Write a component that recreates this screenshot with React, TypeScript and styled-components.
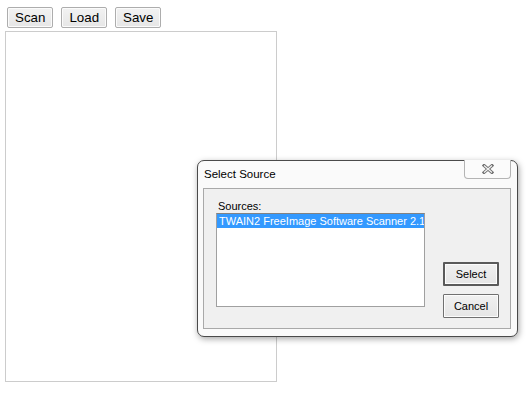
import React from "react";
import styled, { createGlobalStyle } from "styled-components";

const Global = createGlobalStyle`
  html, body { margin: 0; padding: 0; background: #ffffff; }
  body { font-family: "Liberation Sans", Arial, sans-serif; }
`;

const Page = styled.div`
  position: relative;
  width: 528px;
  height: 396px;
  overflow: hidden;
`;

const Toolbar = styled.div`
  display: flex;
  gap: 8px;
  padding: 7px 0 0 7px;
`;

const ToolButton = styled.button`
  font-family: "Liberation Sans", Arial, sans-serif;
  font-size: 13.33px;
  line-height: 15px;
  height: 21px;
  padding: 1px 7px;
  border: 1px solid #adadad;
  border-radius: 2px;
  background: linear-gradient(#f2f2f2, #e6e6e6);
  color: #000;
  box-shadow: inset 0 0 0 1px #fbfbfb;
`;

const CanvasBox = styled.div`
  margin: 3px 0 0 5px;
  width: 270px;
  height: 349px;
  border: 1px solid #cccccc;
  background: #fff;
`;

const Dialog = styled.div`
  position: absolute;
  left: 197px;
  top: 160px;
  width: 319px;
  height: 175px;
  border: 1px solid #4a4a4a;
  border-radius: 7px;
  background: #fafafa;
  box-shadow: 1px 2px 6px rgba(0, 0, 0, 0.35);
  display: flex;
  flex-direction: column;
  font-family: "Liberation Sans", Arial, sans-serif;
  font-size: 11px;
`;

const TitleBar = styled.div`
  position: relative;
  height: 27px;
  display: flex;
  align-items: center;
  padding-left: 6px;
  padding-bottom: 1px;
  box-sizing: border-box;
  color: #000;
  font-size: 11.5px;
`;

const CloseButton = styled.div`
  position: absolute;
  top: -1px;
  right: 6px;
  width: 45px;
  height: 18px;
  border: 1px solid #b4b4b4;
  border-top: none;
  border-radius: 0 0 4px 4px;
  background: #fbfbfb;
  display: flex;
  align-items: center;
  justify-content: center;
`;

const Client = styled.div`
  margin: 0 6px 7px 5px;
  flex: 1;
  border: 1px solid #a9a9a9;
  background: #f0f0f0;
  display: flex;
  padding: 10px 11px 10px 12px;
`;

const LeftCol = styled.div`
  display: flex;
  flex-direction: column;
`;

const Label = styled.div`
  line-height: 14px;
  padding-left: 2px;
  color: #000;
`;

const ListBox = styled.div`
  width: 207px;
  height: 92px;
  border: 1px solid #a0a0a0;
  border-top-color: #828282;
  background: #fff;
`;

const ListItem = styled.div<{ $selected?: boolean }>`
  height: 14px;
  line-height: 14px;
  padding-left: 2px;
  white-space: nowrap;
  overflow: hidden;
  background: ${(p) => (p.$selected ? "#3399ff" : "transparent")};
  color: ${(p) => (p.$selected ? "#fff" : "#000")};
`;

const RightCol = styled.div`
  margin-left: 18px;
  display: flex;
  flex-direction: column;
  justify-content: flex-end;
  gap: 8px;
`;

const DlgButton = styled.button<{ $default?: boolean }>`
  font-family: "Liberation Sans", Arial, sans-serif;
  font-size: 11px;
  width: 56px;
  height: 24px;
  padding: 0;
  color: #000;
  border: ${(p) => (p.$default ? "2px solid #5a5a5a" : "1px solid #707070")};
  border-radius: 1px;
  background: linear-gradient(#f0f0f0, #e5e5e5);
  box-shadow: inset 0 0 0 1px #fcfcfc;
`;

export default function App() {
  return (
    <Page>
      <Global />
      <Toolbar>
        <ToolButton>Scan</ToolButton>
        <ToolButton>Load</ToolButton>
        <ToolButton>Save</ToolButton>
      </Toolbar>
      <CanvasBox />
      <Dialog>
        <TitleBar>
          Select Source
          <CloseButton>
            <svg width="12" height="10" viewBox="0 0 12 10">
              <path d="M2 1.5 L10 8.5 M10 1.5 L2 8.5" stroke="#6e6e6e" strokeWidth="3" strokeLinecap="square" fill="none" />
              <path d="M2 1.5 L10 8.5 M10 1.5 L2 8.5" stroke="#f4f4f4" strokeWidth="1.2" strokeLinecap="butt" fill="none" />
            </svg>
          </CloseButton>
        </TitleBar>
        <Client>
          <LeftCol>
            <Label>Sources:</Label>
            <ListBox>
              <ListItem $selected>TWAIN2 FreeImage Software Scanner 2.1</ListItem>
            </ListBox>
          </LeftCol>
          <RightCol>
            <DlgButton $default>Select</DlgButton>
            <DlgButton>Cancel</DlgButton>
          </RightCol>
        </Client>
      </Dialog>
    </Page>
  );
}
